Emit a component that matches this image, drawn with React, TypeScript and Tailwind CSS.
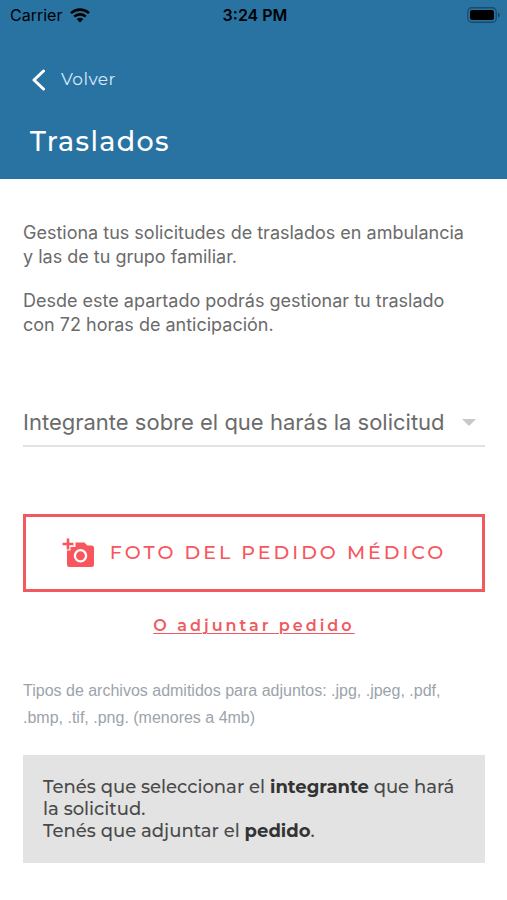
import { useState } from "react";

function WifiIcon() {
  return (
    <svg width="20" height="15" viewBox="0 0 20 15" fill="black" aria-hidden="true">
      <path d="M10 .3C6.300.3 2.900 1.700.400 4a.4.400 0 0 0 0 .6l1.200 1.200c.2.200.4.200.6 0A11.400 11.400 0 0 1 10 2.900c3 0 5.700 1.100 7.800 2.900.2.200.4.200.6 0l1.200-1.200a.4.400 0 0 0 0-.6A14.200 14.200 0 0 0 10 .3z" />
      <path d="M10 5.100c-2.400 0-4.600.9-6.300 2.400a.4.400 0 0 0 0 .6l1.200 1.200c.2.200.4.200.6 0A6.700 6.700 0 0 1 10 7.700c1.700 0 3.300.6 4.500 1.600.2.200.4.200.6 0l1.200-1.200a.4.400 0 0 0 0-.6A9.400 9.400 0 0 0 10 5.100z" />
      <path d="M10 9.800c-1.100 0-2.200.4-3 1.100a.4.400 0 0 0 0 .6l2.700 2.700c.2.200.4.200.6 0l2.700-2.700a.4.400 0 0 0 0-.6c-.8-.7-1.900-1.100-3-1.100z" />
    </svg>
  );
}

function BatteryIcon() {
  return (
    <svg width="33" height="16" viewBox="0 0 33 16" aria-hidden="true">
      <rect x="0.75" y="0.75" width="28.500" height="14.500" rx="4" fill="none" stroke="black" strokeOpacity="0.35" strokeWidth="1.300" />
      <rect x="3" y="3" width="24" height="10" rx="2" fill="black" />
      <path d="M31 5.500c1.200.5 1.700 1.400 1.700 2.500s-.5 2-1.700 2.500z" fillOpacity="0.4" />
    </svg>
  );
}

function AddPhotoIcon() {
  return (
    <svg width="32" height="30" viewBox="0 0 32 30" aria-hidden="true" className="shrink-0">
      <path
        d="M13.500 4.500h9l2.600 3h4.400a2.500 2.500 0 0 1 2.500 2.500v16.500a2.500 2.500 0 0 1-2.500 2.500h-22a2.500 2.500 0 0 1-2.500-2.500V12.500h3.500V9h5z"
        fill="currentColor"
      />
      <path d="M6 0.500v11M0.500 6h11" stroke="currentColor" strokeWidth="2.600" />
      <circle cx="18.500" cy="17.800" r="5.600" fill="none" stroke="white" strokeWidth="2.300" />
    </svg>
  );
}

function StatusBar() {
  return (
    <div className="grid h-[30px] grid-cols-3 items-center pl-[10px] pr-[7px] font-['Inter',sans-serif] text-base text-black">
      <div className="flex items-center gap-2">
        <span>Carrier</span>
        <WifiIcon />
      </div>
      <span className="text-center font-semibold">3:24 PM</span>
      <div className="flex justify-end">
        <BatteryIcon />
      </div>
    </div>
  );
}

export default function App() {
  const [member, setMember] = useState("");

  return (
    <div className="min-h-screen bg-white font-['Inter',sans-serif] text-[#6b6b6b]">
      <header className="bg-[#2973a3] pb-[19px] text-white">
        <StatusBar />
        <div className="px-[30px] font-['Montserrat','Inter',sans-serif]">
          <button type="button" className="mt-9 flex h-7 items-center gap-4 text-[17px] tracking-wide text-[#d5e9f7]">
            <svg width="15" height="22" viewBox="0 0 15 22" fill="none" stroke="white" strokeWidth="3" strokeLinecap="round" strokeLinejoin="round" aria-hidden="true">
              <path d="M13.500 2 4 11l9.500 9" />
            </svg>
            Volver
          </button>
          <h1 className="mt-[30px] text-[27px] leading-9 font-medium tracking-wider">Traslados</h1>
        </div>
      </header>

      <main className="pt-[42px] pr-[22px] pl-[23px]">
        <div className="space-y-5 pr-3 text-lg leading-6">
          <p>Gestiona tus solicitudes de traslados en ambulancia y las de tu grupo familiar.</p>
          <p>Desde este apartado podrás gestionar tu traslado con 72 horas de anticipación.</p>
        </div>

        <div className="relative mt-[62px] border-b-2 border-[#e2e2e2]">
          <select
            aria-label="Integrante sobre el que harás la solicitud"
            value={member}
            onChange={(e) => setMember(e.target.value)}
            className="h-[46px] w-full appearance-none bg-transparent pr-9 text-[22px] outline-none"
          >
            <option value="">Integrante sobre el que harás la solicitud</option>
          </select>
          <svg width="14" height="7" viewBox="0 0 14 7" fill="#c8c8c8" aria-hidden="true" className="pointer-events-none absolute top-5 right-[9px]">
            <path d="M0 0h14L7 7z" />
          </svg>
        </div>

        <button
          type="button"
          className="mt-[67px] flex h-[78px] w-full items-center justify-center gap-4 border-[3px] border-[#f1595f] font-['Montserrat','Inter',sans-serif] text-[19px] font-medium tracking-[3px] text-[#f9555d]"
        >
          <AddPhotoIcon />
          FOTO DEL PEDIDO MÉDICO
        </button>

        <div className="mt-[21px] text-center">
          <a href="#adjuntar" className="font-['Montserrat','Inter',sans-serif] text-base leading-6 font-semibold tracking-[3px] text-[#f1595f] underline decoration-1 underline-offset-2">
            O adjuntar pedido
          </a>
        </div>

        <p className="mt-[39px] pr-3 font-['Liberation_Sans',sans-serif] text-base leading-[27px] text-[#9ba3ab]">
          Tipos de archivos admitidos para adjuntos: .jpg, .jpeg, .pdf, .bmp, .tif, .png. (menores a 4mb)
        </p>

        <div className="mt-6 bg-[#e3e3e3] py-[21px] pr-3 pl-5 font-['Montserrat','Inter',sans-serif] text-lg leading-[22px] font-medium text-[#4a4a4a]">
          <p>
            Tenés que seleccionar el <strong className="text-[#333]">integrante</strong> que hará
            <br />
            la solicitud.
          </p>
          <p>
            Tenés que adjuntar el <strong className="text-[#333]">pedido</strong>.
          </p>
        </div>
      </main>
    </div>
  );
}
